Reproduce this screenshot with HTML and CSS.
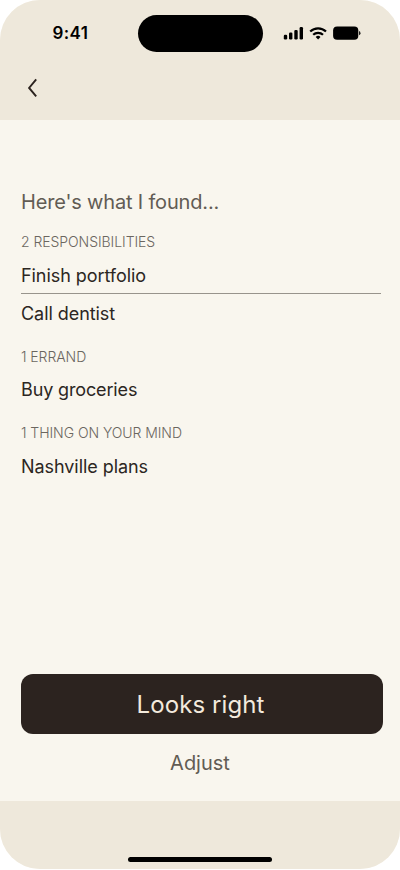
FILE: index.html
```html
<!DOCTYPE html>
<html lang="en">
<head>
<meta charset="utf-8">
<title>Here's what I found</title>
<link rel="stylesheet" href="styles.css">
</head>
<body>
<div class="phone">
  <header class="top">
    <div class="status">
      <span class="time">9:41</span>
      <div class="island"></div>
      <svg class="indicators" width="80" height="16" viewBox="0 0 80 16">
        <rect x="0.8" y="9.8" width="3.4" height="4.6" rx="1.2"/>
        <rect x="6" y="7.6" width="3.4" height="6.8" rx="1.2"/>
        <rect x="11.3" y="4.9" width="3.4" height="9.5" rx="1.2"/>
        <rect x="16.6" y="2" width="3.4" height="12.4" rx="1.2"/>
        <g fill="none" stroke="#000" stroke-width="2.2">
          <path d="M27.2 6.5a11.3 11.3 0 0 1 15.8 0"/>
          <path d="M30.2 9.8a7 7 0 0 1 9.8 0"/>
        </g>
        <path d="M35.1 14.5l-2.4-2.5a3.4 3.4 0 0 1 4.8 0z"/>
        <rect x="50.1" y="1.5" width="25.2" height="13.3" rx="4"/>
        <path d="M76.1 6.1v4.2a2.3 2.3 0 0 0 0-4.2z"/>
      </svg>
    </div>
    <svg class="back" width="12" height="20" viewBox="0 0 12 20"><path d="M9.2 1.3L2.1 9.9l7.1 8.5"/></svg>
  </header>
  <main class="content">
    <h1>Here's what I found...</h1>
    <section>
      <h2>2 RESPONSIBILITIES</h2>
      <ul><li>Finish portfolio</li><li>Call dentist</li></ul>
    </section>
    <section class="single">
      <h2>1 ERRAND</h2>
      <ul><li>Buy groceries</li></ul>
    </section>
    <section>
      <h2>1 THING ON YOUR MIND</h2>
      <ul><li>Nashville plans</li></ul>
    </section>
    <div class="actions">
      <button class="primary">Looks right</button>
      <button class="secondary">Adjust</button>
    </div>
  </main>
  <footer class="bottom"><div class="home"></div></footer>
</div>
</body>
</html>
```

FILE: styles.css
```css
* { box-sizing: border-box; }
body { margin: 0; background: #fff; font-family: Inter, "Liberation Sans", sans-serif; }
.phone {
  width: 400px;
  height: 869px;
  display: flex;
  flex-direction: column;
  overflow: hidden;
  border-radius: 40px;
  background: #f9f6ee;
}
.top { height: 120px; background: #eee8db; }
.status {
  display: grid;
  grid-template-columns: 137.5px 125px 1fr;
  height: 52px;
  padding-top: 14.6px;
}
.time {
  padding-left: 52.5px;
  font-size: 17px;
  font-weight: 600;
  letter-spacing: 0.4px;
  line-height: 37px;
  color: #000;
}
.island { height: 37px; border-radius: 19px; background: #000; }
.indicators { margin: 10.2px 0 0 20.3px; }
.back { display: block; margin: 25.5px 0 0 27px; fill: none; stroke: #2c231f; stroke-width: 1.9; }
.content { flex: 1; display: flex; flex-direction: column; padding: 70px 17px 0 21px; }
h1, h2, ul { margin: 0; padding: 0; }
h1 { margin-bottom: 18px; font-size: 20px; font-weight: 400; line-height: 25px; letter-spacing: -0.17px; color: #625c54; }
section { margin-bottom: 14.6px; }
h1 + section { margin-top: -1px; }
h2 { margin-bottom: 4px; font-size: 14px; font-weight: 300; line-height: 20px; letter-spacing: -0.06px; color: #6b665f; }
ul { list-style: none; width: 360px; }
li { height: 38px; font-size: 18px; line-height: 40px; letter-spacing: -0.06px; color: #2c2622; }
li + li { border-top: 1px solid #98948c; line-height: 39px; margin-top: -1px; height: 39px; }
.single li { line-height: 38px; letter-spacing: -0.14px; }
.actions { display: flex; flex-direction: column; margin-top: auto; padding-bottom: 21.5px; }
button { border: 0; padding: 0; font-family: inherit; }
.primary {
  height: 60px;
  padding: 1px 3px 0 0;
  border-radius: 12px;
  background: #2c231f;
  color: #f3eadd;
  font-size: 24px;
  letter-spacing: 0.1px;
}
.secondary { margin: 13px 4px 1px 0; height: 32px; background: none; color: #625c54; font-size: 20px; }
.bottom {
  height: 68px;
  display: flex;
  justify-content: center;
  align-items: flex-end;
  padding-bottom: 7px;
  background: #eee8db;
}
.home { width: 144px; height: 5px; border-radius: 3px; background: #000; }
```
